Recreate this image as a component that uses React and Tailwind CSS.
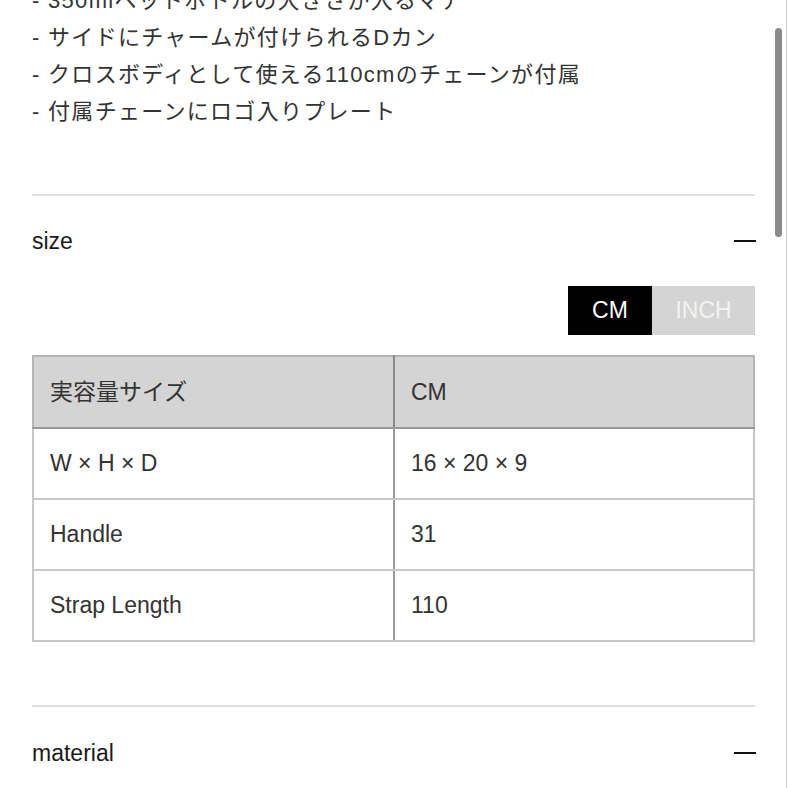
import React, { useState } from "react";

const features = [
  "- 350mlペットボトルの大きさが入るマチ",
  "- サイドにチャームが付けられるDカン",
  "- クロスボディとして使える110cmのチェーンが付属",
  "- 付属チェーンにロゴ入りプレート",
];

const sizes = [
  { label: "W × H × D", cm: "16 × 20 × 9", inch: "6.3 × 7.9 × 3.5" },
  { label: "Handle", cm: "31", inch: "12.2" },
  { label: "Strap Length", cm: "110", inch: "43.3" },
];

const SectionHeader = ({ title, className = "" }) => (
  <div className={`flex items-center justify-between ${className}`}>
    <span className="text-[23px] text-[#1a1a1a]">{title}</span>
    <span className="block w-[22px] h-[2px] bg-[#111] mr-[-1px]" />
  </div>
);

const App = () => {
  const [unit, setUnit] = useState("cm");

  return (
    <div
      className="relative w-[788px] h-[788px] overflow-hidden bg-white"
      style={{ fontFamily: '"Liberation Sans", "Noto Sans CJK JP", sans-serif' }}
    >
      <div className="pl-[32px] pr-[33px]">
        {/* feature list */}
        <ul className="-mt-[18px] text-[22px] leading-[37px] text-[#333] tracking-[1.3px]">
          {features.map((f, i) => (
            <li key={i}>{f}</li>
          ))}
        </ul>

        <div className="mt-[64px] h-[2px] bg-[#e0e0e0]" />

        {/* size */}
        <SectionHeader title="size" className="h-[90px]" />

        <div className="flex justify-end">
          <button
            onClick={() => setUnit("cm")}
            className={`w-[84px] h-[49px] text-[23px] ${
              unit === "cm" ? "bg-black text-white" : "bg-[#d4d4d4] text-[#f2f2f2]"
            }`}
          >
            CM
          </button>
          <button
            onClick={() => setUnit("inch")}
            className={`w-[103px] h-[49px] text-[23px] ${
              unit === "inch" ? "bg-black text-white" : "bg-[#d4d4d4] text-[#f2f2f2]"
            }`}
          >
            INCH
          </button>
        </div>

        <table className="mt-[20px] w-full border-collapse text-[23px] text-[#333]">
          <thead>
            <tr className="h-[72px] bg-[#d4d4d4]">
              <th className="w-[361px] border-2 border-[#b5b5b5] border-r-[#8a8a8a] border-b-[#999] pl-[16px] text-left font-normal">
                実容量サイズ
              </th>
              <th className="border-2 border-[#b5b5b5] border-b-[#999] pl-[16px] text-left font-normal">
                {unit === "cm" ? "CM" : "INCH"}
              </th>
            </tr>
          </thead>
          <tbody>
            {sizes.map((row, i) => (
              <tr key={i} className="h-[71px]">
                <td className="border-2 border-[#c8c8c8] border-r-[#9a9a9a] pl-[16px]">{row.label}</td>
                <td className="border-2 border-[#c8c8c8] pl-[16px]">
                  {unit === "cm" ? row.cm : row.inch}
                </td>
              </tr>
            ))}
          </tbody>
        </table>

        <div className="mt-[63px] h-[2px] bg-[#e0e0e0]" />

        {/* material */}
        <SectionHeader title="material" className="h-[92px]" />
      </div>

      {/* scrollbar overlay */}
      <div className="absolute top-0 right-[1px] h-full w-px bg-[#cfcfcf]" />
      <div className="absolute top-[28px] left-[775px] w-[7px] h-[209px] rounded-full bg-[#8a8a8a]" />
    </div>
  );
};

export default App;
